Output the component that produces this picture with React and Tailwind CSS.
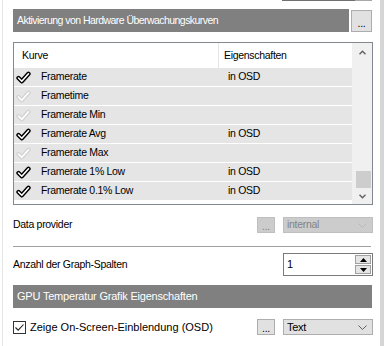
import React from "react";

const FONT = { fontFamily: '"Liberation Sans", Arial, sans-serif' };

function Check({ on }) {
  const outer = on ? "#000000" : "#d4d4d4";
  return (
    <svg width="15" height="13" viewBox="0 0 15 13" className="shrink-0">
      <path d="M2.5 7 L5.8 10.3 L12.5 2.8" fill="none" stroke={outer} strokeWidth="4.4" strokeLinecap="round" strokeLinejoin="round" />
      <path d="M2.5 7 L5.8 10.3 L12.5 2.8" fill="none" stroke="#ffffff" strokeWidth="1.6" strokeLinecap="round" strokeLinejoin="round" />
    </svg>
  );
}

function Chevron({ color = "#7a7a7a" }) {
  return (
    <svg width="9" height="5" viewBox="0 0 9 5">
      <path d="M0.5 0.5 L4.5 4.5 L8.5 0.5" fill="none" stroke={color} strokeWidth="1" />
    </svg>
  );
}

function ScrollArrow({ up }) {
  return (
    <svg width="7" height="5" viewBox="0 0 7 5">
      <path d={up ? "M0.5 4.2 L3.5 1.2 L6.5 4.2" : "M0.5 0.8 L3.5 3.8 L6.5 0.8"} fill="none" stroke="#606060" strokeWidth="1.4" />
    </svg>
  );
}

const rows = [
  { name: "Framerate", on: true, prop: "in OSD" },
  { name: "Frametime", on: false, prop: "" },
  { name: "Framerate Min", on: false, prop: "" },
  { name: "Framerate Avg", on: true, prop: "in OSD" },
  { name: "Framerate Max", on: false, prop: "" },
  { name: "Framerate 1% Low", on: true, prop: "in OSD" },
  { name: "Framerate 0.1% Low", on: true, prop: "in OSD" },
];

export default function App() {
  return (
    <div className="w-[384px] h-[346px] bg-white flex overflow-hidden text-[10.5px] tracking-[-0.3px] text-black" style={FONT}>
      <div className="w-[2px] shrink-0" />
      <div className="w-px shrink-0 bg-[#e6e6e6]" />
      <div className="w-[10px] shrink-0" />
      <div className="w-[360px] shrink-0 flex flex-col">
        {/* top sliver */}
        <div className="flex h-px">
          <div className="w-[269px]" />
          <div className="w-[73px] bg-[#707070]" />
          <div className="w-[17px] bg-[#a8a8a8]" />
        </div>

        {/* header bar 1 */}
        <div className="flex items-start mt-[8px]">
          <div className="w-[336px] h-[23px] bg-[#808080] text-white flex items-center pl-[4px] tracking-[-0.55px]">
            Aktivierung von Hardware Überwachungskurven
          </div>
          <div className="ml-[2px] mt-px w-[21px] h-[22px] bg-[#e1e1e1] border border-[#adadad] flex items-center justify-center leading-none pt-[4px]">
            ...
          </div>
        </div>

        {/* list */}
        <div className="mt-[10px] h-[163px] border border-[#828790] flex">
          <div className="w-[338px] flex flex-col">
            <div className="h-[25px] flex">
              <div className="w-[204px] pl-[8px] flex items-center">Kurve</div>
              <div className="w-px bg-[#e5e5e5]" />
              <div className="flex-1 pl-[5px] flex items-center">Eigenschaften</div>
            </div>
            {rows.map((r) => (
              <div key={r.name} className="h-[18px] mb-px bg-[#e5e5e5] flex items-center">
                <div className="w-[204px] flex items-center pl-[2px]">
                  <Check on={r.on} />
                  <span className="ml-[10px]">{r.name}</span>
                </div>
                <div className="pl-[10px]">{r.prop}</div>
              </div>
            ))}
          </div>
          <div className="w-[20px] bg-[#f0f0f0] flex flex-col items-center">
            <div className="h-[17px] flex items-center justify-center mt-px">
              <ScrollArrow up />
            </div>
            <div className="flex-1" />
            <div className="w-[15px] h-[17px] bg-[#cdcdcd] ml-[2px]" />
            <div className="h-[16px] flex items-center justify-center">
              <ScrollArrow />
            </div>
          </div>
        </div>

        {/* data provider */}
        <div className="mt-[12px] h-[16px] flex items-center">
          <div className="flex-1">Data provider</div>
          <div className="w-[18px] h-[16px] bg-[#cccccc] border border-[#bfbfbf] text-[#838383] flex items-center justify-center leading-none pt-[3px]">
            ...
          </div>
          <div className="ml-[8px] w-[90px] h-[16px] bg-[#cccccc] border border-[#bfbfbf] text-[#838383] flex items-center justify-between pl-[3px] pr-[5px]">
            <span>internal</span>
            <Chevron color="#b8b8b8" />
          </div>
        </div>

        {/* separator */}
        <div className="mt-[13px] h-px w-[358px] bg-[#a0a0a0]" />

        {/* spin row */}
        <div className="mt-[6px] h-[23px] flex items-center">
          <div className="flex-1">Anzahl der Graph-Spalten</div>
          <div className="w-[90px] h-[23px] border border-[#7a7a7a] bg-white flex items-center">
            <div className="flex-1 pl-[3px] text-[11px]">1</div>
            <div className="w-[16px] flex flex-col gap-px mr-px">
              <div className="h-[9px] bg-[#e5e5e5] border border-[#a0a0a0] flex items-center justify-center">
                <svg width="7" height="4" viewBox="0 0 7 4"><path d="M0 4 L3.5 0 L7 4 Z" fill="#000" /></svg>
              </div>
              <div className="h-[9px] bg-[#e5e5e5] border border-[#a0a0a0] flex items-center justify-center">
                <svg width="7" height="4" viewBox="0 0 7 4"><path d="M0 0 L3.5 4 L7 0 Z" fill="#000" /></svg>
              </div>
            </div>
          </div>
        </div>

        {/* header bar 2 */}
        <div className="mt-[9px] w-[359px] h-[23px] bg-[#808080] text-white flex items-center pl-[4px] text-[11px] tracking-[-0.2px]">
          GPU Temperatur Grafik Eigenschaften
        </div>

        {/* checkbox row */}
        <div className="mt-[11px] h-[16px] flex items-center">
          <div className="flex-1 flex items-center">
            <div className="w-[13px] h-[13px] border border-[#333333] bg-white flex items-center justify-center">
              <svg width="11" height="11" viewBox="0 0 11 11">
                <path d="M1.5 5.5 L4.2 8.2 L9.5 2.5" fill="none" stroke="#222" strokeWidth="1.1" />
              </svg>
            </div>
            <span className="ml-[4px] text-[11px] tracking-normal">Zeige On-Screen-Einblendung (OSD)</span>
          </div>
          <div className="w-[18px] h-[16px] bg-[#e1e1e1] border border-[#adadad] flex items-center justify-center leading-none pt-[3px]">
            ...
          </div>
          <div className="ml-[8px] w-[90px] h-[16px] bg-[#e1e1e1] border border-[#adadad] flex items-center justify-between pl-[3px] pr-[5px]">
            <span className="text-[11px]">Text</span>
            <Chevron color="#606060" />
          </div>
        </div>
      </div>
      <div className="flex-1" />
      <div className="w-[4px] shrink-0 bg-[#d6d6d6]" />
    </div>
  );
}
